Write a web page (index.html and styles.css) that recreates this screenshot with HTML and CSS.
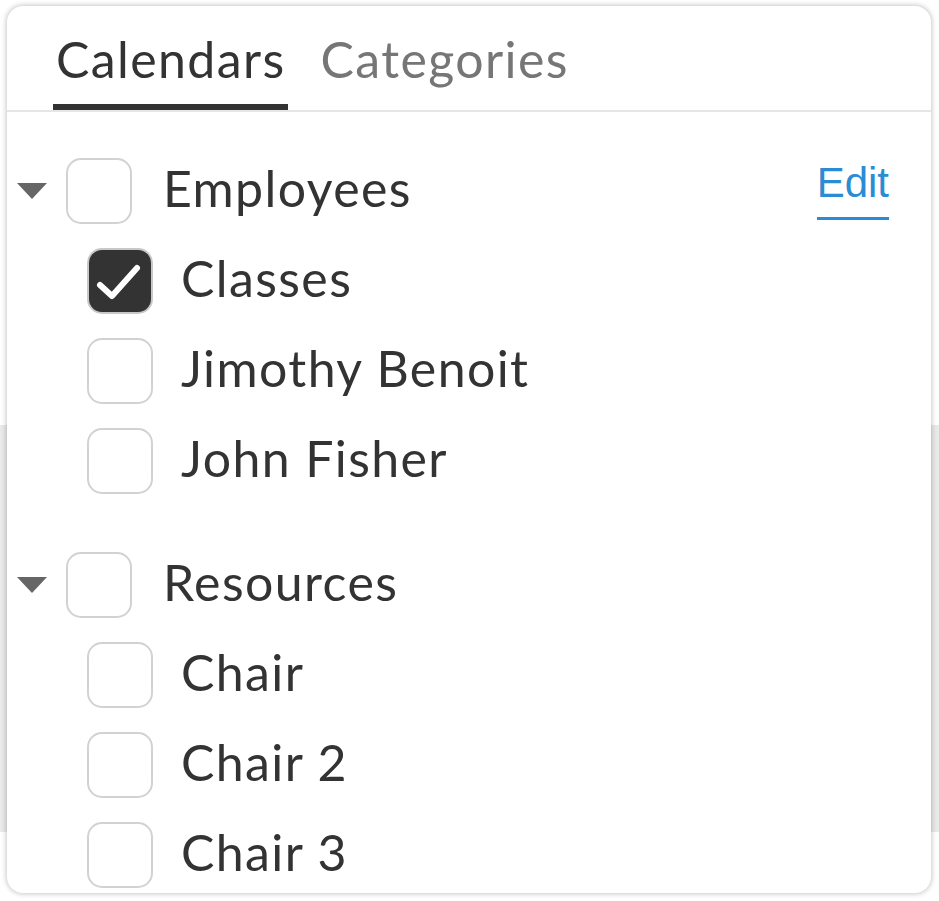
FILE: index.html
```html
<!DOCTYPE html>
<html lang="en">
<head>
<meta charset="utf-8">
<title>Calendars</title>
<link rel="stylesheet" href="styles.css">
</head>
<body>
<div class="card">
  <div class="tabs">
    <div class="tab active">Calendars</div>
    <div class="tab">Categories</div>
  </div>
  <div class="list">
    <div class="group">
      <div class="row head">
        <svg class="caret" viewBox="0 0 30 16"><path d="M0 0H30L15 16Z" fill="#666"/></svg>
        <span class="box"></span>
        <span class="label">Employees</span>
        <a class="edit">Edit</a>
      </div>
      <div class="row child">
        <span class="box checked"><svg viewBox="0 0 62 62"><path d="M11 35 L23 46 L48 18" fill="none" stroke="#fff" stroke-width="6" stroke-linecap="round" stroke-linejoin="round"/></svg></span>
        <span class="label">Classes</span>
      </div>
      <div class="row child">
        <span class="box"></span>
        <span class="label">Jimothy Benoit</span>
      </div>
      <div class="row child">
        <span class="box"></span>
        <span class="label">John Fisher</span>
      </div>
    </div>
    <div class="group">
      <div class="row head">
        <svg class="caret" viewBox="0 0 30 16"><path d="M0 0H30L15 16Z" fill="#666"/></svg>
        <span class="box"></span>
        <span class="label">Resources</span>
      </div>
      <div class="row child">
        <span class="box"></span>
        <span class="label">Chair</span>
      </div>
      <div class="row child">
        <span class="box"></span>
        <span class="label">Chair 2</span>
      </div>
      <div class="row child">
        <span class="box"></span>
        <span class="label">Chair 3</span>
      </div>
    </div>
  </div>
</div>
</body>
</html>
```

FILE: styles.css
```css
html, body {
  margin: 0;
  padding: 0;
}
body {
  width: 939px;
  height: 901px;
  overflow: hidden;
  background: linear-gradient(to bottom, #fff 0, #fff 425px, #e9e9e9 425px, #e9e9e9 832px, #fff 832px);
  font-family: "Lato", "Open Sans", sans-serif;
  color: #333;
}
.card {
  box-sizing: border-box;
  margin: 6px 0 0 7px;
  width: 924px;
  height: 887px;
  border-radius: 16px;
  background: #fff;
  box-shadow: 0 0 5px 1px rgba(0, 0, 0, 0.22);
  overflow: hidden;
}
.tabs {
  display: flex;
  gap: 30px;
  padding-left: 46px;
  border-bottom: 2px solid #e6e6e6;
}
.tab {
  box-sizing: border-box;
  height: 104px;
  padding: 28px 2px 0 3px;
  font-size: 50px;
  line-height: 1;
  letter-spacing: 1.4px;
  color: #767676;
  border-bottom: 6px solid transparent;
}
.tab.active {
  color: #333;
  border-bottom-color: #333;
}
.list {
  display: flex;
  flex-direction: column;
}
.group {
  margin-top: 34px;
}
.row {
  display: flex;
  align-items: center;
  height: 90px;
}
.row.head {
  padding-left: 10px;
  padding-right: 42px;
}
.row.child {
  padding-left: 80px;
}
.caret {
  width: 30px;
  height: 16px;
  margin-right: 19px;
}
.box {
  box-sizing: border-box;
  width: 66px;
  height: 66px;
  border: 2px solid #d2d2d2;
  border-radius: 15px;
  flex: none;
}
.box svg {
  display: block;
  width: 62px;
  height: 62px;
}
.box.checked {
  background: #333;
  border-color: #c8c8c8;
}
.label {
  font-size: 50px;
  line-height: 1;
  letter-spacing: 1.4px;
  padding-bottom: 6px;
}
.head .label {
  margin-left: 31px;
}
.child .label {
  margin-left: 28px;
}
.edit {
  align-self: flex-start;
  margin-top: 16px;
  margin-left: auto;
  font-family: "Liberation Sans", Arial, sans-serif;
  font-size: 42px;
  line-height: 1;
  color: #2b8cd6;
  padding-bottom: 13px;
  border-bottom: 3px solid #2b8cd6;
}
```
